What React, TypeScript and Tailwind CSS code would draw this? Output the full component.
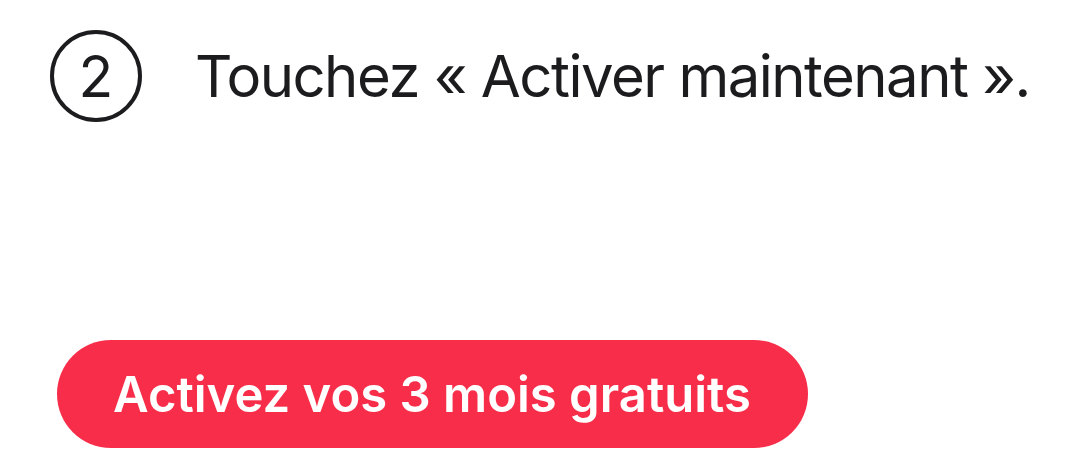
export default function App() {
  return (
    <div
      className="w-[1076px] h-[474px] bg-white relative overflow-hidden"
      style={{ fontFamily: 'Inter, "Noto Sans", sans-serif' }}
    >
      <div className="flex items-center pl-[50px] pt-[30px]">
        <div className="w-[92px] h-[92px] shrink-0 rounded-full border-[4px] border-[#1c1c1e] flex items-center justify-center">
          <span className="text-[57px] leading-none text-[#1c1c1e] font-normal">2</span>
        </div>
        <p className="ml-[53px] whitespace-nowrap text-[58px] leading-none text-[#1c1c1e] font-normal tracking-[-1.5px]">
          Touchez « Activer maintenant ».
        </p>
      </div>
      <div className="pl-[57px] pt-[218px]">
        <button className="w-[751px] h-[108px] rounded-full bg-[#f82d4a] flex items-center pl-[56px]">
          <span className="text-white text-[49px] font-semibold leading-none whitespace-nowrap">
            Activez vos 3 mois gratuits
          </span>
        </button>
      </div>
    </div>
  );
}
